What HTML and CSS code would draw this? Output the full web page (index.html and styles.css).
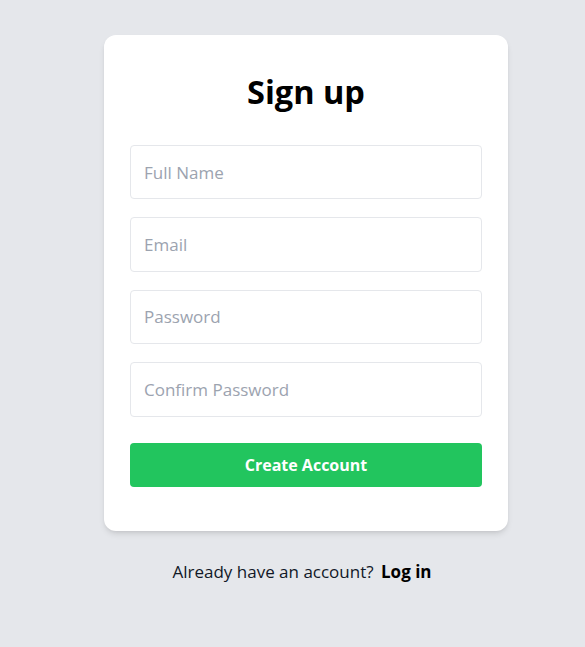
FILE: index.html
```html
<!DOCTYPE html>
<html lang="en">
<head>
<meta charset="utf-8">
<title>Sign up</title>
<link rel="stylesheet" href="styles.css">
</head>
<body>
<main class="page">
  <div class="column">
    <form class="card">
      <h1 class="title">Sign up</h1>
      <div class="fields">
        <input class="field" type="text" placeholder="Full Name">
        <input class="field" type="email" placeholder="Email">
        <input class="field" type="password" placeholder="Password">
        <input class="field" type="password" placeholder="Confirm Password">
      </div>
      <button class="submit" type="button">Create Account</button>
    </form>
    <p class="footer">Already have an account? <a class="login" href="#">Log in</a></p>
  </div>
</main>
</body>
</html>
```
FILE: styles.css
```css
* { box-sizing: border-box; }
html, body { margin: 0; padding: 0; }
body {
  background: #e5e7eb;
  font-family: "Open Sans", "Noto Sans", sans-serif;
  color: #111827;
  min-height: 647px;
}
.page {
  padding: 35px 0 0 104px;
}
.column {
  width: 404px;
  display: flex;
  flex-direction: column;
  align-items: center;
}
.card {
  width: 404px;
  background: #ffffff;
  border-radius: 12px;
  box-shadow: 0 4px 6px -1px rgba(0,0,0,0.1), 0 2px 4px -2px rgba(0,0,0,0.1);
  padding: 37px 26px 44px;
  display: flex;
  flex-direction: column;
}
.title {
  margin: 0 0 33px;
  height: 40px;
  line-height: 40px;
  font-size: 32.5px;
  font-weight: 700;
  text-align: center;
  color: #000;
}
.fields {
  display: flex;
  flex-direction: column;
  gap: 18px;
}
.field {
  display: block;
  width: 100%;
  height: 54.4px;
  border: 1px solid #e5e7eb;
  border-radius: 4px;
  padding: 0 13px;
  font-family: inherit;
  font-size: 17px;
  color: #111827;
  background: #fff;
  outline: none;
}
.field::placeholder { color: #9ca3af; }
.submit {
  margin-top: 26px;
  height: 44px;
  width: 100%;
  border: none;
  border-radius: 4px;
  background: #22c55e;
  color: #ffffff;
  font-family: inherit;
  font-size: 16px;
  font-weight: 700;
  cursor: pointer;
}
.footer {
  margin: 29px 0 0;
  padding-right: 8px;
  line-height: 24px;
  font-size: 17px;
  color: #111827;
  text-align: center;
}
.login {
  margin-left: 3px;
  font-weight: 700;
  color: #000;
  text-decoration: none;
}
```
